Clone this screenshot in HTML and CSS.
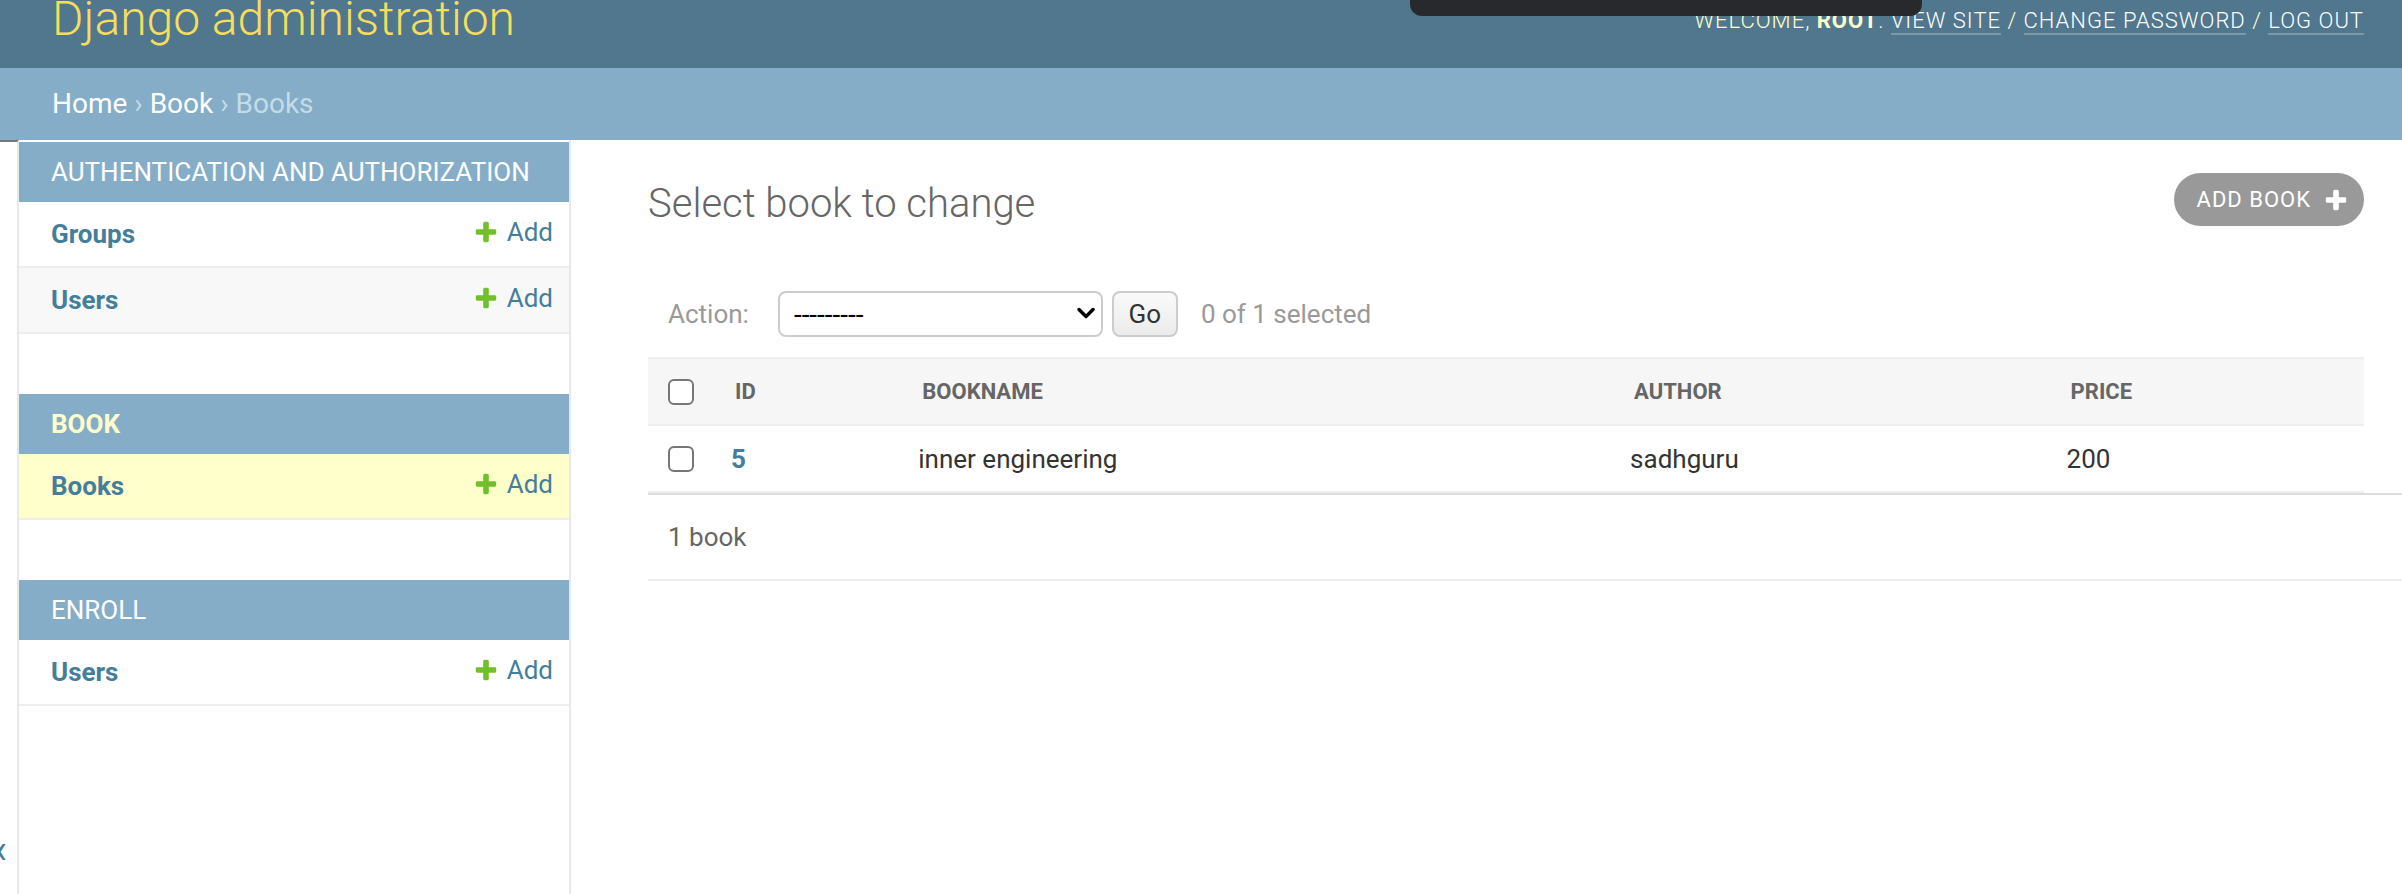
FILE: index.html
```html
<!DOCTYPE html>
<html>
    <head>
        <title>Select book to change | Django site admin</title>
        <link rel="stylesheet" href="styles.css">
    </head>
    <body>
        <div id="header">
            <h1 id="site-name">Django administration</h1>
            <div id="user-tools">
                Welcome, <strong>root</strong>. <a href="#">View site</a> / <a href="#">Change password</a> / <a href="#">Log out</a>
            </div>
        </div>
        <div class="notch"></div>
        <div class="breadcrumbs">
            <a href="#">Home</a> &rsaquo; <a href="#">Book</a> &rsaquo; Books
        </div>

        <div class="main">
            <div class="toggle-nav"><span>&laquo;</span></div>

            <nav id="nav-sidebar">
                <table class="module">
                    <caption>Authentication and Authorization</caption>
                    <tr>
                        <th><a href="#">Groups</a></th>
                        <td><a href="#" class="addlink"><svg viewBox="0 0 1792 1792"><path d="M1600 796v192q0 40-28 68t-68 28h-416v416q0 40-28 68t-68 28h-192q-40 0-68-28t-28-68v-416h-416q-40 0-68-28t-28-68v-192q0-40 28-68t68-28h416v-416q0-40 28-68t68-28h192q40 0 68 28t28 68v416h416q40 0 68 28t28 68z"/></svg>Add</a></td>
                    </tr>
                    <tr class="row2">
                        <th><a href="#">Users</a></th>
                        <td><a href="#" class="addlink"><svg viewBox="0 0 1792 1792"><path d="M1600 796v192q0 40-28 68t-68 28h-416v416q0 40-28 68t-68 28h-192q-40 0-68-28t-28-68v-416h-416q-40 0-68-28t-28-68v-192q0-40 28-68t68-28h416v-416q0-40 28-68t68-28h192q40 0 68 28t28 68v416h416q40 0 68 28t28 68z"/></svg>Add</a></td>
                    </tr>
                </table>
                <table class="module current-app">
                    <caption>Book</caption>
                    <tr class="current-model">
                        <th><a href="#">Books</a></th>
                        <td><a href="#" class="addlink"><svg viewBox="0 0 1792 1792"><path d="M1600 796v192q0 40-28 68t-68 28h-416v416q0 40-28 68t-68 28h-192q-40 0-68-28t-28-68v-416h-416q-40 0-68-28t-28-68v-192q0-40 28-68t68-28h416v-416q0-40 28-68t68-28h192q40 0 68 28t28 68v416h416q40 0 68 28t28 68z"/></svg>Add</a></td>
                    </tr>
                </table>
                <table class="module">
                    <caption>Enroll</caption>
                    <tr>
                        <th><a href="#">Users</a></th>
                        <td><a href="#" class="addlink"><svg viewBox="0 0 1792 1792"><path d="M1600 796v192q0 40-28 68t-68 28h-416v416q0 40-28 68t-68 28h-192q-40 0-68-28t-28-68v-416h-416q-40 0-68-28t-28-68v-192q0-40 28-68t68-28h416v-416q0-40 28-68t68-28h192q40 0 68 28t28 68v416h416q40 0 68 28t28 68z"/></svg>Add</a></td>
                    </tr>
                </table>
            </nav>

            <div id="content">
                <div class="content-head">
                    <h1>Select book to change</h1>
                    <a href="#" class="addbook">Add book<svg viewBox="0 0 1792 1792"><path d="M1600 796v192q0 40-28 68t-68 28h-416v416q0 40-28 68t-68 28h-192q-40 0-68-28t-28-68v-416h-416q-40 0-68-28t-28-68v-192q0-40 28-68t68-28h416v-416q0-40 28-68t68-28h192q40 0 68 28t28 68v416h416q40 0 68 28t28 68z"/></svg></a>
                </div>

                <form id="changelist">
                    <div class="actions">
                        <label>Action:</label>
                        <span class="select-wrap">
                            <select name="action">
                                <option value="" selected>---------</option>
                                <option value="delete_selected">Delete selected books</option>
                            </select>
                            <svg class="chevron" viewBox="0 0 18 12"><path d="M2 2.5l7 7 7-7" fill="none" stroke="#000" stroke-width="3.4" stroke-linecap="round" stroke-linejoin="round"/></svg>
                        </span>
                        <button type="button" class="go">Go</button>
                        <span class="counter">0 of 1 selected</span>
                    </div>

                    <table id="result_list">
                        <thead>
                            <tr>
                                <th class="col-check"><input type="checkbox" class="cb"></th>
                                <th class="col-id">ID</th>
                                <th class="col-name">Bookname</th>
                                <th class="col-author">Author</th>
                                <th class="col-price">Price</th>
                            </tr>
                        </thead>
                        <tbody>
                            <tr>
                                <td><input type="checkbox" class="cb"></td>
                                <td><a href="#" class="pk">5</a></td>
                                <td>inner engineering</td>
                                <td>sadhguru</td>
                                <td>200</td>
                            </tr>
                        </tbody>
                    </table>
                    <p class="paginator">1 book</p>
                </form>
            </div>
        </div>
    </body>
</html>
```

FILE: styles.css
```css
body {
    margin: 0;
    font-family: Roboto, "Lucida Grande", Verdana, Arial, sans-serif;
    color: #333;
    background: #fff;
    overflow: hidden;
}
a {
    color: #447e9b;
    text-decoration: none;
}

/* header */
#header {
    display: flex;
    justify-content: space-between;
    align-items: flex-start;
    height: 68px;
    padding: 0 38px 0 52px;
    background: #50778d;
    color: #ffc;
    overflow: hidden;
}
#site-name {
    margin: -9px 0 0;
    font-size: 48px;
    line-height: 56px;
    font-weight: 300;
    color: #f5dd5d;
}
#user-tools {
    margin-top: 8px;
    font-size: 22px;
    font-weight: 300;
    letter-spacing: 1px;
    text-transform: uppercase;
    white-space: nowrap;
}
#user-tools strong {
    font-weight: 700;
}
#user-tools a {
    color: #fff;
    border-bottom: 2px solid rgba(255, 255, 255, 0.25);
}
.notch {
    position: absolute;
    left: 1410px;
    top: 0;
    width: 512px;
    height: 16px;
    background: #28292d;
    border-radius: 0 0 12px 12px;
}

.breadcrumbs {
    height: 40px;
    padding: 16px 52px;
    background: #85adc7;
    color: #c4dce8;
    font-size: 28px;
    line-height: 40px;
}
.breadcrumbs a {
    color: #fff;
}

/* layout */
.main {
    display: flex;
    height: 754px;
}
.toggle-nav {
    flex: 0 0 17px;
    border-top: 2px solid #777;
    border-right: 2px solid #e8e8e8;
    overflow: hidden;
}
.toggle-nav span {
    display: block;
    width: 46px;
    margin: 684px 0 0 -25px;
    text-align: center;
    font-size: 40px;
    color: #447e9b;
}

/* sidebar */
#nav-sidebar {
    flex: 0 0 552px;
    box-sizing: border-box;
    padding-top: 2px;
    border-right: 2px solid #e8e8e8;
}
.module {
    width: 100%;
    border-collapse: collapse;
    margin-bottom: 60px;
}
.module caption {
    padding: 16px 32px;
    background: #85adc7;
    color: #fff;
    font-size: 26px;
    line-height: 28px;
    text-transform: uppercase;
    text-align: left;
    white-space: nowrap;
}
.current-app caption {
    color: #ffc;
    font-weight: 700;
}
.module th,
.module td {
    height: 64px;
    padding: 0 16px;
    border-bottom: 2px solid #eee;
    font-size: 26px;
    line-height: 32px;
}
.module th {
    padding-left: 32px;
    text-align: left;
    font-weight: 700;
}
.module td {
    text-align: right;
}
.module .row2 {
    background: #f8f8f8;
}
.module .current-model {
    background: #ffc;
}
.addlink {
    display: inline-flex;
    align-items: center;
}
.addlink svg {
    width: 26px;
    height: 26px;
    margin-right: 8px;
    fill: #70bf2b;
}

/* content */
#content {
    flex: 1;
    min-width: 0;
    padding: 33px 38px 0 77px;
}
.content-head {
    display: flex;
    justify-content: space-between;
    align-items: flex-start;
}
.content-head h1 {
    margin: 7px 0 0;
    font-size: 40px;
    line-height: 48px;
    font-weight: 300;
    color: #666;
}
.addbook {
    display: flex;
    align-items: center;
    gap: 12px;
    height: 53px;
    padding: 0 15px 0 23px;
    border-radius: 27px;
    background: #999;
    color: #fff;
    font-size: 22px;
    letter-spacing: 1px;
    text-transform: uppercase;
}
.addbook svg {
    width: 26px;
    height: 26px;
    fill: #fff;
}

#changelist {
    margin-top: 43px;
}
.actions {
    display: flex;
    align-items: center;
    height: 46px;
    padding: 20px;
    color: #999;
    font-size: 26px;
}
.select-wrap {
    position: relative;
    margin-left: 29px;
}
.select-wrap select {
    appearance: none;
    display: block;
    width: 325px;
    height: 46px;
    padding: 0 0 0 14px;
    border: 2px solid #ccc;
    border-radius: 8px;
    background: #fff;
    color: #000;
    font-family: inherit;
    font-size: 28px;
}
.chevron {
    position: absolute;
    right: 8px;
    top: 16px;
    width: 18px;
    height: 12px;
}
.go {
    width: 66px;
    height: 46px;
    margin-left: 9px;
    padding: 0;
    border: 2px solid #ccc;
    border-radius: 8px;
    background: linear-gradient(#fafafa, #ebebeb);
    color: #333;
    font-family: inherit;
    font-size: 26px;
}
.counter {
    margin-left: 23px;
}

#result_list {
    width: 100%;
    border-collapse: collapse;
    table-layout: fixed;
}
#result_list th {
    box-sizing: border-box;
    height: 67px;
    padding: 0 20px;
    background: #f6f6f6;
    border-top: 2px solid #eee;
    border-bottom: 2px solid #eee;
    color: #666;
    font-size: 22px;
    font-weight: 700;
    text-align: left;
    text-transform: uppercase;
}
#result_list td {
    box-sizing: border-box;
    height: 67px;
    padding: 0 16px;
    border-bottom: 2px solid #eee;
    font-size: 26px;
}
#result_list td:first-child {
    padding-left: 20px;
}
.col-check { width: 67px; }
.col-id { width: 187px; }
.col-name { width: 711px; }
.col-author { width: 436px; }
.col-price { width: 313px; }
.pk {
    font-weight: 700;
}
.cb {
    appearance: none;
    display: block;
    width: 26px;
    height: 26px;
    margin: 0;
    border: 2px solid #767676;
    border-radius: 6px;
    background: #fff;
}

.paginator {
    margin: 0 -38px 0 0;
    padding: 20px;
    border-top: 2px solid #ddd;
    border-bottom: 2px solid #eee;
    color: #666;
    font-size: 26px;
    line-height: 44px;
}
```
